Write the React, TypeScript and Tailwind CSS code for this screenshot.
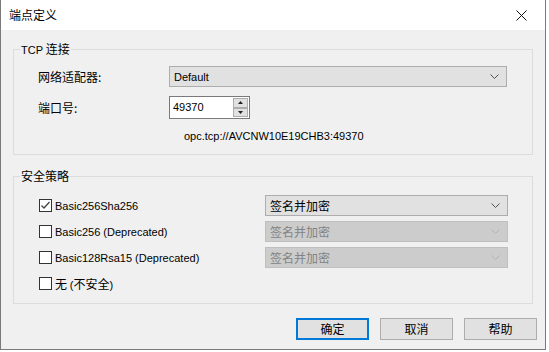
import React from 'react';

const latin = "font-['Liberation_Sans','Noto_Sans_CJK_SC',sans-serif] text-[11px]";
const cjk = "font-['Noto_Sans_CJK_SC',sans-serif] text-[12px]";

function Chevron({ disabled }: { disabled?: boolean }) {
  return (
    <svg width="9" height="5" viewBox="0 0 9 5" className="shrink-0">
      <polyline points="0.5,0.5 4.5,4.5 8.5,0.5" fill="none" stroke={disabled ? '#b4b4b4' : '#505050'} strokeWidth="1" />
    </svg>
  );
}

function Select({ value, width, disabled, isCjk }: { value: string; width: string; disabled?: boolean; isCjk?: boolean }) {
  return (
    <div
      className={`flex h-[21px] ${width} items-center justify-between border pl-[4px] pr-[7px] ${
        disabled ? 'border-[#bfbfbf] bg-[#cccccc] text-[#838383]' : 'border-[#adadad] bg-[#e1e1e1] text-black'
      }`}
    >
      <span className={`${isCjk ? cjk : latin} leading-[16px]`}>{value}</span>
      <Chevron disabled={disabled} />
    </div>
  );
}

function Checkbox({ checked }: { checked?: boolean }) {
  return (
    <div className="flex h-[13px] w-[13px] shrink-0 items-center justify-center border border-[#333333] bg-white">
      {checked ? (
        <svg width="11" height="11" viewBox="0 0 11 11">
          <polyline points="1.5,5.5 4,8 9.5,2" fill="none" stroke="#444" strokeWidth="1.3" />
        </svg>
      ) : null}
    </div>
  );
}

function Button({ label, primary }: { label: string; primary?: boolean }) {
  return (
    <div
      className={`flex h-[22px] w-[73px] items-center justify-center bg-[#e1e1e1] ${
        primary ? 'border-2 border-[#0078d7]' : 'border border-[#adadad]'
      }`}
    >
      <span className={`${cjk} leading-[16px] text-black`}>{label}</span>
    </div>
  );
}

const policies = [
  { name: 'Basic256Sha256', checked: true, disabled: false },
  { name: 'Basic256 (Deprecated)', checked: false, disabled: true },
  { name: 'Basic128Rsa15 (Deprecated)', checked: false, disabled: true },
];

export default function App() {
  return (
    <div className="h-[352px] w-[549px] bg-white">
      <div className="flex h-[350px] w-[546px] flex-col border-x border-b border-[#7a7a7a] bg-[#f0f0f0]">
        {/* title bar */}
        <div className="flex h-[30px] items-center justify-between bg-white pl-[8px] pr-[18px]">
          <span className={`${cjk} leading-[16px] text-black`}>端点定义</span>
          <svg width="11" height="11" viewBox="0 0 11 11">
            <path d="M0.5 0.5 L10.5 10.5 M10.5 0.5 L0.5 10.5" stroke="#111" strokeWidth="1" />
          </svg>
        </div>

        <div className="flex flex-col px-[12px]">
          {/* TCP group */}
          <fieldset className="mt-[10px] border border-[#dcdcdc]">
            <legend className="ml-[6px] px-[1px] leading-[16px] text-black">
              <span className={latin}>TCP </span>
              <span className={cjk}>连接</span>
            </legend>
            <div className="pb-[10px] pl-[24px] pt-[8px]">
              <div className="flex items-center">
                <span className={`${cjk} w-[131px] leading-[16px] text-black`}>网络适配器:</span>
                <Select value="Default" width="w-[338px]" />
              </div>
              <div className="mt-[9px] flex items-center">
                <span className={`${cjk} w-[131px] leading-[16px] text-black`}>端口号:</span>
                <div className="flex h-[23px] items-stretch border border-[#7a7a7a] bg-white">
                  <div className={`${latin} flex w-[63px] items-center pl-[3px] text-black`}>49370</div>
                  <div className="flex flex-col justify-between py-[1px] pr-[1px]">
                    <div className="flex h-[10px] w-[15px] items-center justify-center border border-[#adadad] bg-[#e1e1e1]">
                      <svg width="5" height="3" viewBox="0 0 5 3"><polygon points="0,3 5,3 2.5,0" fill="#222" /></svg>
                    </div>
                    <div className="flex h-[10px] w-[15px] items-center justify-center border border-[#adadad] bg-[#e1e1e1]">
                      <svg width="5" height="3" viewBox="0 0 5 3"><polygon points="0,0 5,0 2.5,3" fill="#222" /></svg>
                    </div>
                  </div>
                </div>
              </div>
              <div className={`${latin} mt-[9px] pl-[146px] leading-[16px] text-black`}>opc.tcp://AVCNW10E19CHB3:49370</div>
            </div>
          </fieldset>

          {/* security group */}
          <fieldset className="mt-[13px] border border-[#dcdcdc]">
            <legend className={`${cjk} ml-[6px] px-[1px] leading-[16px] text-black`}>安全策略</legend>
            <div className="flex flex-col gap-[5px] pb-[9px] pl-[25px] pt-[11px]">
              {policies.map((p) => (
                <div key={p.name} className="flex h-[21px] items-center">
                  <div className="flex w-[226px] items-center gap-[3px]">
                    <Checkbox checked={p.checked} />
                    <span className={`${latin} leading-[16px] text-black`}>{p.name}</span>
                  </div>
                  <Select value="签名并加密" width="w-[243px]" disabled={p.disabled} isCjk />
                </div>
              ))}
              <div className="flex h-[21px] items-center gap-[3px]">
                <Checkbox />
                <span className="leading-[16px] text-black">
                  <span className={cjk}>无 </span>
                  <span className={latin}>(</span>
                  <span className={cjk}>不安全</span>
                  <span className={latin}>)</span>
                </span>
              </div>
            </div>
          </fieldset>
        </div>

        {/* buttons */}
        <div className="mt-[14px] flex justify-end gap-[11px] pr-[8px]">
          <Button label="确定" primary />
          <Button label="取消" />
          <Button label="帮助" />
        </div>
      </div>
    </div>
  );
}
